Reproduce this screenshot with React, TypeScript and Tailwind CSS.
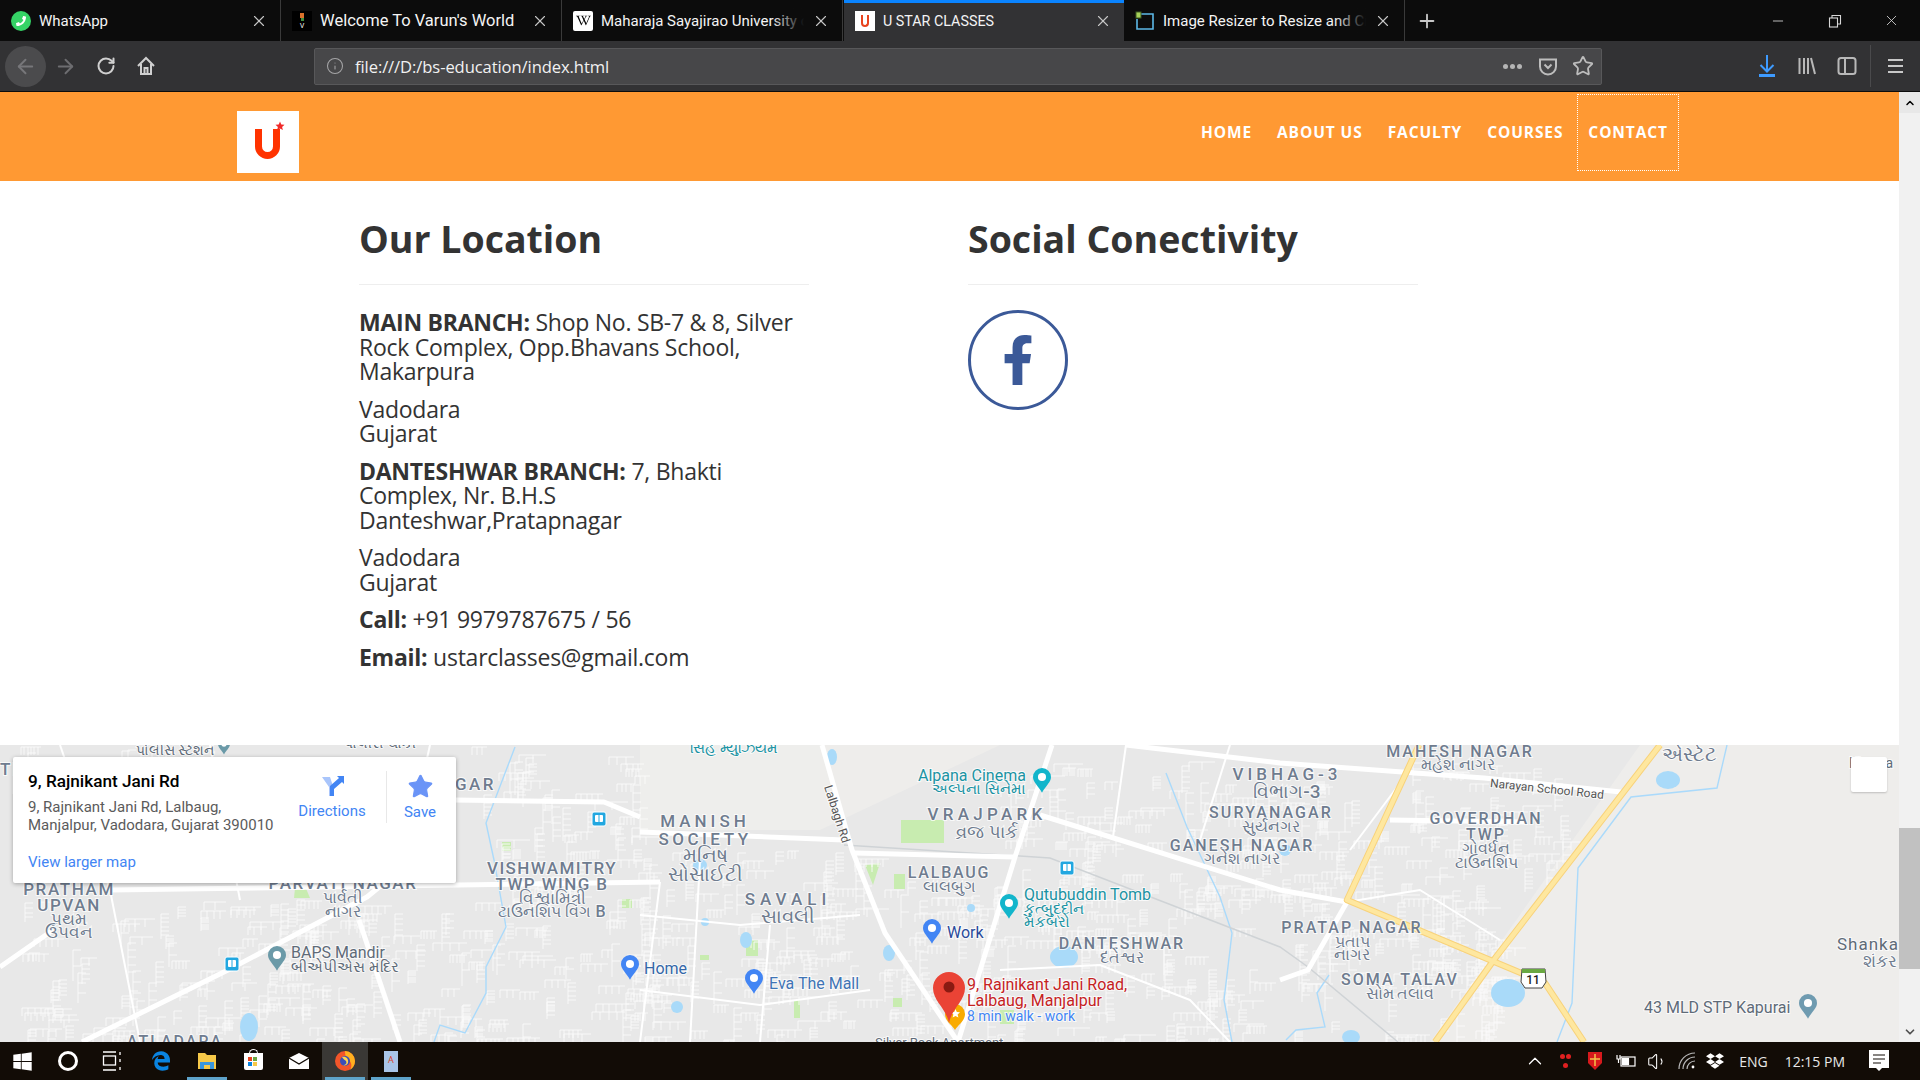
import React from "react";
import {
  ArrowLeft,
  ArrowRight,
  ChevronDown,
  ChevronUp,
  Info,
  Minus,
  Plus,
  RotateCw,
  Star,
  Volume1,
  X,
} from "lucide-react";
import { FaDropbox, FaEdgeLegacy, FaFacebookF, FaPhoneAlt, FaWikipediaW, FaWindows } from "react-icons/fa";

// ─── Browser chrome ──────────────────────────────────────────────────────────

function Tab({
  title,
  icon,
  active,
  faded,
  textClass = "text-[15px]",
}: {
  title: string;
  icon: React.ReactNode;
  active?: boolean;
  faded?: boolean;
  textClass?: string;
}) {
  return (
    <div
      className={
        active
          ? "relative ml-[1px] flex h-[41px] w-[280px] shrink-0 items-center bg-[#323234] pl-[11px] pr-[12px]"
          : "flex h-[41px] w-[281px] shrink-0 items-center border-r border-[#3a3a3a] pl-[11px] pr-[12px]"
      }
    >
      {active && <div className="absolute left-0 right-0 top-0 h-[3px] bg-[#0a84ff]" />}
      <div className="flex h-5 w-5 shrink-0 items-center justify-center">{icon}</div>
      <div className="relative ml-2 min-w-0 flex-1 overflow-hidden whitespace-nowrap pt-[1px] font-['Roboto',sans-serif] text-[#f4f4f4]">
        <span className={textClass}>{title}</span>
        {faded && <div className="absolute bottom-0 right-0 top-0 w-8 bg-gradient-to-r from-transparent to-[#0c0c0c]" />}
      </div>
      <X className="ml-2 h-[18px] w-[18px] shrink-0 text-[#c8c8c8]" strokeWidth={1.5} />
    </div>
  );
}

function TabBar() {
  return (
    <div className="flex h-[41px] items-center bg-[#0c0c0c]">
      <Tab
        title="WhatsApp"
        icon={
          <div className="flex h-5 w-5 items-center justify-center rounded-full bg-[#35d366]">
            <FaPhoneAlt className="h-[10px] w-[10px] -scale-x-100 text-white" />
          </div>
        }
      />
      <Tab
        title="Welcome To Varun's World"
        textClass="text-[16.5px]"
        icon={
          <div className="flex h-5 w-5 flex-col items-center justify-center bg-black">
            <div className="h-[5px] w-[4px] bg-[#d9702b]" />
            <div className="h-[3px] w-[3px] bg-[#3f8f3f]" />
            <div className="mt-[1px] text-[7px] leading-none text-white">V</div>
          </div>
        }
      />
      <Tab
        title="Maharaja Sayajirao University of Baroda"
        faded
        icon={
          <div className="flex h-5 w-5 items-center justify-center rounded-[2px] bg-white">
            <FaWikipediaW className="h-[15px] w-[15px] text-black" />
          </div>
        }
      />
      <Tab
        active
        title="U STAR CLASSES"
        textClass="text-[14.3px]"
        icon={
          <div className="flex h-5 w-5 items-center justify-center bg-white">
            <div className="h-[12px] w-[8px] rounded-b-[4px] border-x-[2px] border-b-[2px] border-[#e8431e]" />
          </div>
        }
      />
      <Tab
        title="Image Resizer to Resize and Crop Images"
        faded
        icon={
          <svg viewBox="0 0 20 20" className="h-5 w-5">
            <path d="M6 3h12v15H2V8" fill="none" stroke="#5cb8e6" strokeWidth="1.6" />
            <rect x="1" y="1" width="5" height="6" fill="#a6d05a" stroke="#3c5a20" strokeWidth="1" />
          </svg>
        }
      />
      <div className="ml-[11px] flex h-[41px] w-[20px] items-center">
        <Plus className="h-[22px] w-[22px] shrink-0 text-[#c8c8c8]" strokeWidth={2} />
      </div>
      <div className="ml-auto flex items-center pr-[20px] text-[#d8d8d8]">
        <Minus className="mr-[-1px] h-[16px] w-[16px]" strokeWidth={1.3} />
        <svg viewBox="0 0 14 14" className="ml-[43px] h-[14px] w-[14px]" fill="none" stroke="currentColor" strokeWidth="1.1">
          <rect x="1.5" y="4" width="8" height="9" />
          <path d="M4 4V1.5h8.5V10H9.5" />
        </svg>
        <X className="ml-[41px] h-[17px] w-[17px]" strokeWidth={1.2} />
      </div>
    </div>
  );
}

function NavBar() {
  return (
    <div className="flex h-[51px] items-center border-b border-[#0c0c0c] bg-[#323234] pl-[5px]">
      <div className="flex h-[41px] w-[41px] items-center justify-center rounded-full bg-[#4b4b4d]">
        <ArrowLeft className="h-[23px] w-[23px] text-[#77777a]" strokeWidth={2} />
      </div>
      <ArrowRight className="ml-[8px] h-[23px] w-[23px] text-[#6d6d70]" strokeWidth={2} />
      <RotateCw className="ml-[19px] h-[20px] w-[20px] text-[#d0d0d0]" strokeWidth={2.4} />
      <svg viewBox="0 0 20 22" className="ml-[20px] h-[22px] w-[20px]" fill="none" stroke="#d0d0d0" strokeWidth="2">
        <path d="M2 11l8-8 8 8M5 9v10h10V9" />
        <path d="M8.5 19v-6h3v6" />
      </svg>
      <div className="ml-[158px] flex h-[37px] w-[1288px] items-center rounded-[2px] border border-[#58585a] bg-[#474749] pl-[11px] pr-[7px]">
        <Info className="h-[18px] w-[18px] text-[#a5a5a7]" strokeWidth={1.4} />
        <div className="ml-[11px] pt-[2px] font-['Open_Sans',sans-serif] text-[16.6px] tracking-[-0.1px] text-[#f1f1f1]">
          file:///D:/bs-education/index.html
        </div>
        <div className="ml-auto flex items-center">
          <div className="flex gap-[2px]">
            <div className="h-[5px] w-[5px] rounded-full bg-[#b5b5b5]" />
            <div className="h-[5px] w-[5px] rounded-full bg-[#b5b5b5]" />
            <div className="h-[5px] w-[5px] rounded-full bg-[#b5b5b5]" />
          </div>
          <svg viewBox="0 0 20 20" className="ml-[16px] h-[21px] w-[20px]" fill="none" stroke="#bdbdbd" strokeWidth="2">
            <path d="M2 3h16v7a8 8 0 0 1-16 0z" />
            <path d="M6.5 8l3.5 3.5L13.5 8" />
          </svg>
          <Star className="ml-[14px] h-[22px] w-[22px] text-[#bdbdbd]" strokeWidth={2} />
        </div>
      </div>
      <svg viewBox="0 0 20 24" className="ml-[155px] h-[24px] w-[20px]" fill="none" stroke="#3e9bff">
        <path d="M10 1v16M3.5 11l6.5 6.5 6.5-6.5" strokeWidth="2" />
        <path d="M2 21.5h16" strokeWidth="3" />
      </svg>
      <svg viewBox="0 0 20 20" className="ml-[20px] h-[20px] w-[20px]" fill="none" stroke="#b8b8b8" strokeWidth="2">
        <path d="M2.5 2v16M7 2v16M11 2v16M14 2l4 16" />
      </svg>
      <svg viewBox="0 0 20 20" className="ml-[20px] h-[20px] w-[20px]" fill="none" stroke="#b8b8b8" strokeWidth="2">
        <rect x="1.5" y="2" width="17" height="16" rx="2.5" />
        <path d="M8 2v16" />
      </svg>
      <div className="ml-[13px] h-[42px] w-px bg-[#4a4a4c]" />
      <div className="ml-[17px] flex w-[15px] flex-col gap-[4px]">
        <div className="h-[2px] bg-[#c8c8c8]" />
        <div className="h-[2px] bg-[#c8c8c8]" />
        <div className="h-[2px] bg-[#c8c8c8]" />
      </div>
    </div>
  );
}

// ─── Site header ─────────────────────────────────────────────────────────────

const NAV_ITEMS = ["HOME", "ABOUT US", "FACULTY", "COURSES", "CONTACT"];

function SiteHeader() {
  return (
    <header className="flex h-[89px] items-start bg-[#ff9933] pl-[237px] pr-[220px]">
      <div className="mt-[19px] h-[62px] w-[62px] bg-white">
        <svg viewBox="0 0 62 62" className="h-[62px] w-[62px]">
          <path d="M21.5 18v17.5a9 9 0 0 0 18 0V18" fill="none" stroke="#ff3300" strokeWidth="7" />
          <path d="M43 10.5l1.3 3 3.2.2-2.4 2.2.8 3.2-2.9-1.7-2.9 1.7.8-3.2-2.4-2.2 3.2-.2z" fill="#f02a2a" />
        </svg>
      </div>
      <nav className="ml-auto mt-[2px] flex gap-[3px] font-['Open_Sans',sans-serif] text-[15.5px] font-bold tracking-[0.9px] text-white">
        {NAV_ITEMS.map((item) => (
          <div
            key={item}
            className={
              item === "CONTACT"
                ? "flex h-[77px] items-center border border-dotted border-white px-[10px]"
                : "flex h-[77px] items-center px-[11px]"
            }
          >
            {item}
          </div>
        ))}
      </nav>
    </header>
  );
}

// ─── Page content ────────────────────────────────────────────────────────────

function ColumnTitle({ children }: { children: React.ReactNode }) {
  return (
    <h2 className="h-[104px] border-b border-[#eeeeee] pt-[33px] text-[37.5px] font-bold leading-[50px] text-[#333333]">
      {children}
    </h2>
  );
}

function ContactSection() {
  return (
    <section className="flex h-[564px] gap-[159px] bg-white pl-[359px] font-['Open_Sans',sans-serif] text-[#333333]">
      <div className="w-[450px]">
        <ColumnTitle>Our Location</ColumnTitle>
        <div className="mt-[25px] flex flex-col gap-[12.6px] text-[23px] leading-[24.7px] tracking-[-0.26px]">
          <p>
            <b>MAIN BRANCH:</b> Shop No. SB-7 &amp; 8, Silver
            <br />
            Rock Complex, Opp.Bhavans School,
            <br />
            Makarpura
          </p>
          <p>
            Vadodara
            <br />
            Gujarat
          </p>
          <p>
            <b>DANTESHWAR BRANCH:</b> 7, Bhakti
            <br />
            Complex, Nr. B.H.S
            <br />
            Danteshwar,Pratapnagar
          </p>
          <p>
            Vadodara
            <br />
            Gujarat
          </p>
          <p>
            <b>Call:</b> +91 9979787675 / 56
          </p>
          <p>
            <b>Email:</b> ustarclasses@gmail.com
          </p>
        </div>
      </div>
      <div className="w-[450px]">
        <ColumnTitle>Social Conectivity</ColumnTitle>
        <div className="mt-[25px] flex h-[100px] w-[100px] items-center justify-center rounded-full border-[3px] border-[#3b5998]">
          <FaFacebookF className="h-[50px] w-[50px] text-[#3b5998]" />
        </div>
      </div>
    </section>
  );
}

// ─── Map drawing ─────────────────────────────────────────────────────────────

type Label = [string, number, number, number, number?];

const GREY = "#6f7c8f";
const TEAL = "#1b93a3";

// [text, x, baseline, size, letter spacing]
const PLACE_LABELS: Label[] = [
  ["PRATHAM", 69, 895, 17, 1.6],
  ["UPVAN", 69, 911, 17, 1.6],
  ["PARVATI NAGAR", 343, 889, 17, 1.6],
  ["VISHWAMITRY", 552, 874, 17, 1.4],
  ["TWP WING B", 552, 890, 17, 1.4],
  ["MANISH", 705, 827, 17, 4],
  ["SOCIETY", 705, 845, 17, 3.5],
  ["VRAJPARK", 987, 820, 17, 4.3],
  ["SAVALI", 788, 905, 17, 5],
  ["LALBAUG", 949, 878, 16, 1.8],
  ["DANTESHWAR", 1122, 949, 16, 2],
  ["VIBHAG-3", 1287, 780, 17, 4],
  ["SURYANAGAR", 1271, 818, 16, 2.1],
  ["GANESH NAGAR", 1242, 851, 16, 2],
  ["MAHESH NAGAR", 1460, 757, 16, 2],
  ["GOVERDHAN", 1486, 824, 16, 2],
  ["TWP", 1486, 840, 16, 2],
  ["PRATAP NAGAR", 1352, 933, 16, 2],
  ["SOMA TALAV", 1400, 985, 16, 2],
  ["ATLADARA", 175, 1047, 16, 2],
];

const LOCAL_LABELS: Label[] = [
  ["પ્રથમ", 69, 925, 17],
  ["ઉપવન", 69, 938, 17],
  ["પાર્વતી", 343, 903, 16],
  ["નાગર", 343, 917, 16],
  ["વિશ્વામિત્રી", 552, 904, 17],
  ["ટાઉનશિપ વિંગ B", 552, 917, 16],
  ["મનિષ", 705, 862, 20],
  ["સોસાઈટી", 705, 881, 20],
  ["વ્રજ પાર્ક", 987, 838, 18],
  ["સાવલી", 788, 923, 20],
  ["લાલબુગ", 949, 892, 16],
  ["દંતેશ્વર", 1122, 963, 16],
  ["વિભાગ-3", 1287, 798, 19],
  ["સુર્યનગર", 1271, 832, 16],
  ["ગનેશ નાગર", 1242, 864, 16],
  ["મહેશ નાગર", 1458, 770, 16],
  ["ગોવર્ધન", 1486, 854, 16],
  ["ટાઉનશિપ", 1486, 868, 16],
  ["પ્રતાપ", 1352, 947, 16],
  ["નાગર", 1352, 960, 16],
  ["સોમ તલાવ", 1400, 999, 16],
  ["એસ્ટેટ", 1689, 761, 20],
  ["શંકર", 1880, 967, 17],
];

const MAJOR_ROADS = [
  "M0 967L53 930M82 1042L228 970L367 897L400 870",
  "M359 920L400 1042",
  "M110 890L660 882",
  "M453 800L604 802L640 817",
  "M640 832L844 840",
  "M854 853L1015 857",
  "M822 745L852 850L885 933L958 1042",
  "M1052 745L1015 857L958 1042",
  "M1040 815L1280 890L1347 902",
  "M1126 745L1280 763L1484 778L1621 792",
  "M1390 820L1525 822",
  "M1280 980L1308 970L1347 902",
];

const MINOR_ROADS = [
  "M1126 745L1113 837",
  "M640 915L740 925L860 915",
  "M640 990L760 1005L870 990",
  "M60 745L110 890L140 1042",
  "M210 745L240 900",
  "M430 745L400 880",
  "M660 882L640 1042",
  "M700 860L690 1042",
  "M770 925L760 1042",
  "M1000 970L1100 965L1190 1000L1230 1042",
  "M1347 902L1420 890L1500 940",
  "M1230 745L1200 840",
  "M1410 770L1350 850",
];

const WATER = [
  "M515 747L486 823L494 860L506 927L486 967L486 993L465 1033L440 1025L434 1042",
  "M1727 745L1717 788L1631 797L1578 868L1572 1003L1557 1042",
  "M1166 773L1187 827L1220 897L1232 933L1224 1000L1232 1042",
  "M1329 975L1317 993L1325 1027L1296 1030L1286 1040",
];

const PONDS = [
  [249, 1027, 9, 14],
  [1668, 780, 12, 9],
  [1508, 993, 17, 14],
  [1064, 957, 14, 11],
  [889, 953, 6, 8],
  [746, 940, 6, 8],
  [677, 1007, 6, 6],
  [971, 908, 4, 4],
  [705, 922, 4, 4],
  [832, 757, 5, 8],
  [700, 865, 7, 6],
  [1351, 1037, 9, 7],
  [1285, 850, 6, 6],
];

const GREENS = [
  "M901 820h43v23h-43z",
  "M865 865l15-2-7 22z",
  "M894 874h11v15h-11z",
  "M295 888l10-2 5 12h-16z",
  "M502 842h9v9h-9z",
  "M622 899h10v9h-10z",
  "M746 940h12v16h-12z",
  "M794 1000h6v18h-6z",
  "M700 955h9v5h-9z",
  "M893 998h9v9h-9z",
  "M1000 1010h14v14h-14z",
];

// Small residential street combs, seeded so the picture stays the same.
function buildStreets() {
  let seed = 11;
  const rnd = () => {
    seed = (seed * 9301 + 49297) % 233280;
    return seed / 233280;
  };
  const areas = [
    [20, 900, 300, 140],
    [280, 900, 220, 140],
    [470, 745, 170, 110],
    [500, 860, 160, 180],
    [640, 850, 220, 190],
    [860, 880, 120, 150],
    [990, 760, 200, 90],
    [980, 860, 280, 180],
    [1200, 780, 200, 120],
    [1290, 870, 210, 170],
    [1400, 760, 170, 110],
    [1430, 880, 70, 130],
    [0, 745, 170, 100],
  ];
  let d = "";
  areas.forEach(([ax, ay, aw, ah]) => {
    const blocks = Math.round((aw * ah) / 420);
    for (let i = 0; i < blocks; i++) {
      const x = Math.round(ax + rnd() * aw);
      const y = Math.round(ay + rnd() * ah);
      const len = 10 + Math.round(rnd() * 26);
      const horizontal = rnd() > 0.5;
      d += horizontal ? `M${x} ${y}h${len}` : `M${x} ${y}v${len}`;
      const teeth = 2 + Math.round(rnd() * 4);
      for (let t = 0; t < teeth; t++) {
        const off = Math.round((len / teeth) * t);
        d += horizontal ? `M${x + off} ${y}v8` : `M${x} ${y + off}h8`;
      }
    }
  });
  return d;
}

const STREETS = buildStreets();

function Pin({ x, y, fill, r = 9 }: { x: number; y: number; fill: string; r?: number }) {
  return (
    <g>
      <path
        d={`M${x} ${y + r * 1.75}C${x - r * 0.4} ${y + r * 1} ${x - r} ${y + r * 0.6} ${x - r} ${y}a${r} ${r} 0 0 1 ${r * 2} 0C${x + r} ${y + r * 0.6} ${x + r * 0.4} ${y + r * 1} ${x} ${y + r * 1.75}z`}
        fill={fill}
      />
      <circle cx={x} cy={y} r={r * 0.45} fill="#ffffff" />
    </g>
  );
}

function Metro({ x, y }: { x: number; y: number }) {
  return (
    <g>
      <rect x={x - 7} y={y - 7} width="14" height="14" rx="2" fill="#22a7e0" stroke="#ffffff" strokeWidth="1" />
      <rect x={x - 4} y={y - 4} width="8" height="7" rx="1" fill="#ffffff" />
      <path d={`M${x} ${y - 4}v7`} stroke="#22a7e0" strokeWidth="1" />
    </g>
  );
}

function MapLabel({
  x,
  y,
  size = 16,
  fill = "#5f6b78",
  anchor = "start",
  spacing = 0,
  weight = 400,
  children,
}: {
  x: number;
  y: number;
  size?: number;
  fill?: string;
  anchor?: "start" | "middle" | "end";
  spacing?: number;
  weight?: number;
  children: React.ReactNode;
}) {
  return (
    <text
      x={x}
      y={y}
      fontSize={size}
      fill={fill}
      textAnchor={anchor}
      letterSpacing={spacing}
      fontWeight={weight}
      stroke="#ffffff"
      strokeWidth="2"
      strokeOpacity="0.75"
      paintOrder="stroke"
    >
      {children}
    </text>
  );
}

function MapCanvas() {
  return (
    <svg viewBox="0 745 1899 297" className="block h-[297px] w-[1899px] font-['Roboto','Noto_Sans',sans-serif]">
      <rect x="0" y="745" width="1899" height="297" fill="#eeedeb" />
      <path d="M0 745H640V830H820L1000 745H1640L1430 1042H0z" fill="#e8e8e8" />
      <path d="M640 745h180v85H640z" fill="#eeeeec" />

      {GREENS.map((d) => (
        <path key={d} d={d} fill="#c8ecb0" />
      ))}

      <path d={STREETS} fill="none" stroke="#fbfbfb" strokeWidth="0.9" />

      {WATER.map((d) => (
        <path key={d} d={d} fill="none" stroke="#aadafb" strokeWidth="1.4" />
      ))}
      {PONDS.map(([cx, cy, rx, ry]) => (
        <ellipse key={`${cx}-${cy}`} cx={cx} cy={cy} rx={rx} ry={ry} fill="#a9daf9" />
      ))}

      <path d="M844 845L1050 858L1280 947L1308 967L1398 1042" fill="none" stroke="#cfd3d6" strokeWidth="1.5" />
      {MINOR_ROADS.map((d) => (
        <path key={d} d={d} fill="none" stroke="#ffffff" strokeWidth="2" strokeLinejoin="round" />
      ))}
      {MAJOR_ROADS.map((d) => (
        <path key={d} d={d} fill="none" stroke="#ffffff" strokeWidth="5" strokeLinejoin="round" />
      ))}

      {/* Highways */}
      <g fill="none" strokeLinejoin="round">
        <path d="M1419 745L1347 900L1521 973L1545 983L1584 1042" stroke="#f8d27a" strokeWidth="6.5" />
        <path d="M1660 745L1496 957L1435 1042" stroke="#f8d27a" strokeWidth="6.5" />
        <path d="M1419 745L1347 900L1521 973L1545 983L1584 1042" stroke="#fee79f" strokeWidth="4.5" />
        <path d="M1660 745L1496 957L1435 1042" stroke="#fee79f" strokeWidth="4.5" />
      </g>

      {PLACE_LABELS.map(([text, x, y, size, spacing]) => (
        <MapLabel key={text + x} x={x} y={y} size={size} fill={GREY} anchor="middle" spacing={spacing} weight={500}>
          {text}
        </MapLabel>
      ))}
      {LOCAL_LABELS.map(([text, x, y, size]) => (
        <MapLabel key={text + x} x={x} y={y} size={size} fill={GREY} anchor="middle" weight={500}>
          {text}
        </MapLabel>
      ))}

      <MapLabel x={0} y={775} size={17} fill={GREY} spacing={2} weight={500}>
        TI
      </MapLabel>
      <MapLabel x={496} y={790} size={17} fill={GREY} anchor="end" spacing={2.5} weight={500}>
        NAGAR
      </MapLabel>
      <MapLabel x={175} y={755} size={14} anchor="middle">
        પોલીસ સ્ટેશન
      </MapLabel>
      <MapLabel x={380} y={748} size={14} anchor="middle">
        પોલીસ ચોકી
      </MapLabel>
      <Pin x={224} y={744} fill="#6b9aa8" r={6} />
      <MapLabel x={734} y={753} size={15} fill={TEAL} anchor="middle">
        સિંહ મ્યુઝિયમ
      </MapLabel>

      {/* Points of interest */}
      <Pin x={277} y={955} fill="#6b9aa8" r={9} />
      <MapLabel x={291} y={958} size={16}>
        BAPS Mandir
      </MapLabel>
      <MapLabel x={291} y={972} size={15}>
        બીએપીએસ મંદિર
      </MapLabel>

      <Pin x={630} y={964} fill="#4285f4" r={9} />
      <MapLabel x={644} y={974} size={16} fill="#3367a8">
        Home
      </MapLabel>
      <Pin x={754} y={978} fill="#4285f4" r={9} />
      <MapLabel x={769} y={989} size={16} fill="#3f74b5">
        Eva The Mall
      </MapLabel>
      <Pin x={932} y={928} fill="#4285f4" r={9} />
      <MapLabel x={947} y={938} size={16} fill="#2a4a9a">
        Work
      </MapLabel>

      <Pin x={1042} y={777} fill="#12b5cb" r={9} />
      <MapLabel x={918} y={781} size={16} fill={TEAL}>
        Alpana Cinema
      </MapLabel>
      <MapLabel x={1026} y={794} size={15} fill={TEAL} anchor="end">
        અલ્પના સિનેમા
      </MapLabel>
      <Pin x={1009} y={903} fill="#12b5cb" r={9} />
      <MapLabel x={1024} y={900} size={16} fill={TEAL}>
        Qutubuddin Tomb
      </MapLabel>
      <MapLabel x={1024} y={914} size={15} fill={TEAL}>
        કુત્બુદ્દીન
      </MapLabel>
      <MapLabel x={1024} y={927} size={15} fill={TEAL}>
        મકબરો
      </MapLabel>

      <Pin x={1808} y={1003} fill="#6f9bb0" r={9} />
      <MapLabel x={1644} y={1013} size={16}>
        43 MLD STP Kapurai
      </MapLabel>
      <MapLabel x={1837} y={950} size={17} spacing={1}>
        Shankar
      </MapLabel>
      <MapLabel x={1849} y={768} size={14}>
        Khanta
      </MapLabel>
      <MapLabel x={875} y={1047} size={13}>
        Silver Rock Apartment
      </MapLabel>

      <g transform="rotate(72 837 814)">
        <MapLabel x={837} y={818} size={12} anchor="middle" fill="#555555">
          Lalbagh Rd
        </MapLabel>
      </g>
      <g transform="rotate(6 1547 789)">
        <MapLabel x={1547} y={793} size={12} anchor="middle" fill="#555555">
          Narayan School Road
        </MapLabel>
      </g>

      <Metro x={599} y={819} />
      <Metro x={232} y={964} />
      <Metro x={1067} y={868} />

      {/* National highway shield */}
      <path d="M1522 969h23l1 13-4 6h-17l-4-6z" fill="#ffffff" stroke="#444444" strokeWidth="1" />
      <path d="M1522 969h23v4h-23z" fill="#6aa842" />
      <text x="1533" y="984" fontSize="12" fontWeight={500} textAnchor="middle" fill="#222222">
        11
      </text>

      {/* Selected place */}
      <path d="M955 1030c-3-5-10-9-10-16a10 10 0 0 1 20 0c0 7-7 11-10 16z" fill="#f9ab00" />
      <path d="M955.5 1009l1.3 3 3.2.2-2.4 2.2.8 3.2-2.9-1.7-2.9 1.7.8-3.2-2.4-2.2 3.2-.2z" fill="#ffffff" />
      <path d="M949 1023c-3-15-16-22-16-35a16 16 0 0 1 32 0c0 13-13 20-16 35z" fill="#ea4335" />
      <circle cx="949" cy="987" r="5.5" fill="#8a1a12" />
      <MapLabel x={967} y={990} size={16} fill="#c5221f">
        9, Rajnikant Jani Road,
      </MapLabel>
      <MapLabel x={967} y={1006} size={16} fill="#c5221f">
        Lalbaug, Manjalpur
      </MapLabel>
      <MapLabel x={967} y={1021} size={14} fill="#4285f4">
        8 min walk - work
      </MapLabel>
    </svg>
  );
}

function PlaceCard() {
  return (
    <div className="absolute left-[13px] top-[12px] flex h-[126px] w-[443px] rounded-[2px] bg-white pl-[15px] pt-[13px] font-['Roboto',sans-serif] shadow-[0_1px_4px_rgba(0,0,0,0.3)]">
      <div className="w-[250px] shrink-0">
        <div className="text-[17.2px] font-medium leading-[22px] text-black">9, Rajnikant Jani Rd</div>
        <div className="mt-[6px] whitespace-nowrap text-[15px] leading-[18px] text-[#5b5b5b]">
          9, Rajnikant Jani Rd, Lalbaug,
          <br />
          Manjalpur, Vadodara, Gujarat 390010
        </div>
        <div className="mt-[19px] text-[15px] leading-[18px] text-[#4285f4]">View larger map</div>
      </div>
      <div className="flex w-[108px] shrink-0 flex-col items-center pt-[4px] text-[15px] text-[#4285f4]">
        <svg viewBox="0 0 24 24" className="h-[24px] w-[24px]">
          <path d="M2 3h8l3 9v10H9V13z" fill="#a9c5fb" />
          <path d="M10 22V12L19 4l-2-2h7v8l-2-2-8 7v7z" fill="#4285f4" />
        </svg>
        <div className="mt-[2px]">Directions</div>
      </div>
      <div className="mt-[1px] h-[52px] w-px shrink-0 bg-[#e8e8e8]" />
      <div className="flex w-[66px] shrink-0 flex-col items-center pt-[3px] text-[15px] text-[#4285f4]">
        <Star className="h-[27px] w-[27px] fill-[#6a94f7] text-[#6a94f7]" strokeWidth={1} />
        <div className="mt-[1px]">Save</div>
      </div>
    </div>
  );
}

function MapSection() {
  return (
    <section className="relative h-[297px] overflow-hidden">
      <MapCanvas />
      <PlaceCard />
      <div className="absolute left-[1851px] top-[12px] h-[35px] w-[36px] rounded-[2px] bg-white shadow-[0_1px_2px_rgba(0,0,0,0.2)]" />
    </section>
  );
}

// ─── Scrollbar and taskbar ───────────────────────────────────────────────────

function Scrollbar() {
  return (
    <div className="flex w-[21px] shrink-0 flex-col items-center bg-[#f1f1f1]">
      <div className="flex h-[21px] w-full items-center justify-center bg-[#e8e8e8]">
        <ChevronUp className="h-[12px] w-[12px] text-black" strokeWidth={3} />
      </div>
      <div className="mt-[715px] h-[141px] w-full bg-[#c1c1c1]" />
      <div className="mt-auto flex h-[21px] w-full items-center justify-center">
        <ChevronDown className="h-[14px] w-[14px] text-[#505050]" strokeWidth={3} />
      </div>
    </div>
  );
}

function TaskIcon({ active, open, children }: { active?: boolean; open?: boolean; children: React.ReactNode }) {
  return (
    <div
      className={
        active
          ? "relative flex h-[38px] w-[46px] items-center justify-center bg-[#3a3835]"
          : "relative flex h-[38px] w-[46px] items-center justify-center"
      }
    >
      {children}
      {open && <div className="absolute bottom-0 left-[3px] right-[3px] h-[3px] bg-[#5ea3c9]" />}
    </div>
  );
}

function Taskbar() {
  return (
    <div className="flex h-[38px] items-center bg-[#120c06] pr-[31px]">
      <TaskIcon>
        <FaWindows className="mr-[2px] h-[21px] w-[21px] text-white" />
      </TaskIcon>
      <TaskIcon>
        <div className="mr-[3px] h-[20px] w-[20px] rounded-full border-[3px] border-white" />
      </TaskIcon>
      <TaskIcon>
        <svg viewBox="0 0 20 20" className="mr-[6px] h-[20px] w-[20px]" fill="none" stroke="#ffffff" strokeWidth="1.3">
          <path d="M1 1h13M1 19h13M18 1v3M18 8v3M18 16v3" />
          <rect x="1.5" y="5" width="12" height="9" />
        </svg>
      </TaskIcon>
      <TaskIcon>
        <FaEdgeLegacy className="h-[20px] w-[20px] text-[#0a84e0]" />
      </TaskIcon>
      <TaskIcon open>
        <svg viewBox="0 0 20 20" className="h-[20px] w-[20px]">
          <path d="M1 2h7l2 2h9v14H1z" fill="#f7c948" />
          <path d="M3 18v-7h14v7h-4v-4H7v4z" fill="#3a96dd" />
        </svg>
      </TaskIcon>
      <TaskIcon>
        <div className="relative h-[17px] w-[19px] rounded-b-[2px] bg-white">
          <div className="absolute left-[4px] top-[4px] grid grid-cols-2 gap-[1px]">
            <div className="h-[4px] w-[4px] bg-[#e8431e]" />
            <div className="h-[4px] w-[4px] bg-[#6aa842]" />
            <div className="h-[4px] w-[4px] bg-[#0a84e0]" />
            <div className="h-[4px] w-[4px] bg-[#f7c948]" />
          </div>
          <div className="absolute -top-[4px] left-[5px] h-[5px] w-[9px] rounded-t-full border border-b-0 border-white" />
        </div>
      </TaskIcon>
      <TaskIcon>
        <svg viewBox="0 0 20 16" className="h-[16px] w-[20px]">
          <path d="M0 5l10-5 10 5v11H0z" fill="#ffffff" />
          <path d="M0 5l10 6 10-6" fill="none" stroke="#120c06" strokeWidth="1.4" />
        </svg>
      </TaskIcon>
      <TaskIcon active open>
        <svg viewBox="0 0 22 22" className="h-[22px] w-[22px]">
          <circle cx="11" cy="11" r="10" fill="#f2552a" />
          <path d="M11 1a10 10 0 0 1 10 10c0 4-2 7-5 9 2-3 2-7-1-10-2-2-4-3-4-9z" fill="#ffb01f" />
          <circle cx="11" cy="11" r="5" fill="#3b4fb8" />
          <path d="M8 7c4-1 7 2 6 6-1 2-3 3-5 2 3 0 4-2 3-4-1-1-3-2-4-4z" fill="#ffd34d" />
        </svg>
      </TaskIcon>
      <TaskIcon open>
        <div className="flex h-[21px] w-[14px] flex-col items-center bg-[#a9c5e8] pt-[4px] text-[9px] leading-none text-[#d9442a]">
          A
        </div>
      </TaskIcon>

      <div className="ml-auto flex items-center text-white">
        <ChevronUp className="h-[22px] w-[22px]" strokeWidth={1.4} />
        <div className="ml-[11px] flex h-[16px] w-[16px] flex-wrap items-center justify-center gap-[1px]">
          <div className="h-[5px] w-[5px] rounded-full bg-[#e02020]" />
          <div className="h-[5px] w-[5px] rounded-full bg-[#e02020]" />
          <div className="h-[5px] w-[5px] rounded-full bg-[#e02020]" />
        </div>
        <svg viewBox="0 0 14 18" className="ml-[15px] h-[18px] w-[14px]">
          <path d="M0 0h14v11l-7 7-7-7z" fill="#d7191c" />
          <path d="M7 2v12M2 7h10" stroke="#f5c24a" strokeWidth="1.5" />
        </svg>
        <svg viewBox="0 0 20 14" className="ml-[14px] h-[14px] w-[20px]" fill="none" stroke="#ffffff" strokeWidth="1.2">
          <rect x="5" y="3" width="14" height="9" />
          <rect x="6.5" y="4.5" width="6" height="6" fill="#ffffff" />
          <path d="M1 1v4h3V1M2.5 5v4" />
        </svg>
        <Volume1 className="ml-[11px] h-[21px] w-[21px]" strokeWidth={1.2} />
        <svg viewBox="0 0 18 18" className="ml-[10px] h-[18px] w-[18px]" fill="none" stroke="#b9b9b9" strokeWidth="1.2">
          <path d="M1 17A16 16 0 0 1 17 1M5 17A12 12 0 0 1 17 5M9 17a8 8 0 0 1 8-8" />
          <circle cx="15" cy="15" r="1.4" fill="#ffffff" stroke="none" />
        </svg>
        <FaDropbox className="ml-[10px] h-[18px] w-[18px]" />
        <div className="ml-[15px] font-['Open_Sans',sans-serif] text-[14px] text-[#e8e8e8]">ENG</div>
        <div className="ml-[17px] font-['Open_Sans',sans-serif] text-[14px] text-[#e8e8e8]">12:15 PM</div>
        <svg viewBox="0 0 20 22" className="ml-[24px] h-[22px] w-[20px]">
          <path d="M0 0h20v18h-7l-3 3-3-3H0z" fill="#ffffff" />
          <path d="M4 5h12M4 9h12M4 13h8" stroke="#120c06" strokeWidth="1.2" />
        </svg>
      </div>
    </div>
  );
}

// ─── Page ────────────────────────────────────────────────────────────────────

export default function App() {
  return (
    <div className="flex h-[1080px] w-[1920px] flex-col overflow-hidden bg-white">
      <TabBar />
      <NavBar />
      <div className="flex h-[950px] shrink-0">
        <main className="w-[1899px] shrink-0">
          <SiteHeader />
          <ContactSection />
          <MapSection />
        </main>
        <Scrollbar />
      </div>
      <Taskbar />
    </div>
  );
}
